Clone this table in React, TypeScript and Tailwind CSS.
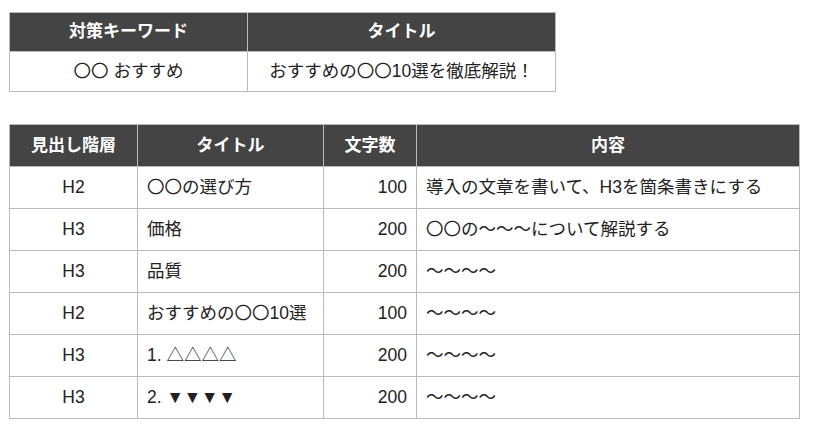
import React from "react";

const font = { fontFamily: '"Liberation Sans", "Noto Sans CJK JP", sans-serif' };

const rows = [
  ["H2", "〇〇の選び方", "100", "導入の文章を書いて、H3を箇条書きにする"],
  ["H3", "価格", "200", "〇〇の〜〜〜について解説する"],
  ["H3", "品質", "200", "〜〜〜〜"],
  ["H2", "おすすめの〇〇10選", "100", "〜〜〜〜"],
  ["H3", "1. △△△△", "200", "〜〜〜〜"],
  ["H3", "2. ▼▼▼▼", "200", "〜〜〜〜"],
];

export default function App() {
  return (
    <div className="w-[814px] h-[436px] bg-white text-[17.5px] text-[#222]" style={font}>
      <div className="pt-[12px] pl-[9px]">
        <table className="border-collapse table-fixed w-[546px]">
          <colgroup>
            <col className="w-[238px]" />
            <col className="w-[308px]" />
          </colgroup>
          <thead>
            <tr className="h-[39px] bg-[#444444] text-white text-[17px]">
              <th className="border border-[#bbbbbb] text-center font-bold">対策キーワード</th>
              <th className="border border-[#bbbbbb] text-center font-bold">タイトル</th>
            </tr>
          </thead>
          <tbody>
            <tr className="h-[40px]">
              <td className="border border-[#bbbbbb] text-center">〇〇 おすすめ</td>
              <td className="border border-[#bbbbbb] text-center">おすすめの〇〇10選を徹底解説！</td>
            </tr>
          </tbody>
        </table>
        <table className="border-collapse table-fixed w-[790px] mt-[32px]">
          <colgroup>
            <col className="w-[128px]" />
            <col className="w-[186px]" />
            <col className="w-[93px]" />
            <col className="w-[383px]" />
          </colgroup>
          <thead>
            <tr className="h-[42px] bg-[#444444] text-white text-[17px]">
              <th className="border border-[#bbbbbb] text-center font-bold">見出し階層</th>
              <th className="border border-[#bbbbbb] text-center font-bold">タイトル</th>
              <th className="border border-[#bbbbbb] text-center font-bold">文字数</th>
              <th className="border border-[#bbbbbb] text-center font-bold">内容</th>
            </tr>
          </thead>
          <tbody>
            {rows.map((r, i) => (
              <tr key={i} className="h-[42px]">
                <td className="border border-[#bbbbbb] text-center">{r[0]}</td>
                <td className="border border-[#bbbbbb] text-left pl-[9px]">{r[1]}</td>
                <td className="border border-[#bbbbbb] text-right pr-[9px]">{r[2]}</td>
                <td className="border border-[#bbbbbb] text-left pl-[9px]">{r[3]}</td>
              </tr>
            ))}
          </tbody>
        </table>
      </div>
    </div>
  );
}
